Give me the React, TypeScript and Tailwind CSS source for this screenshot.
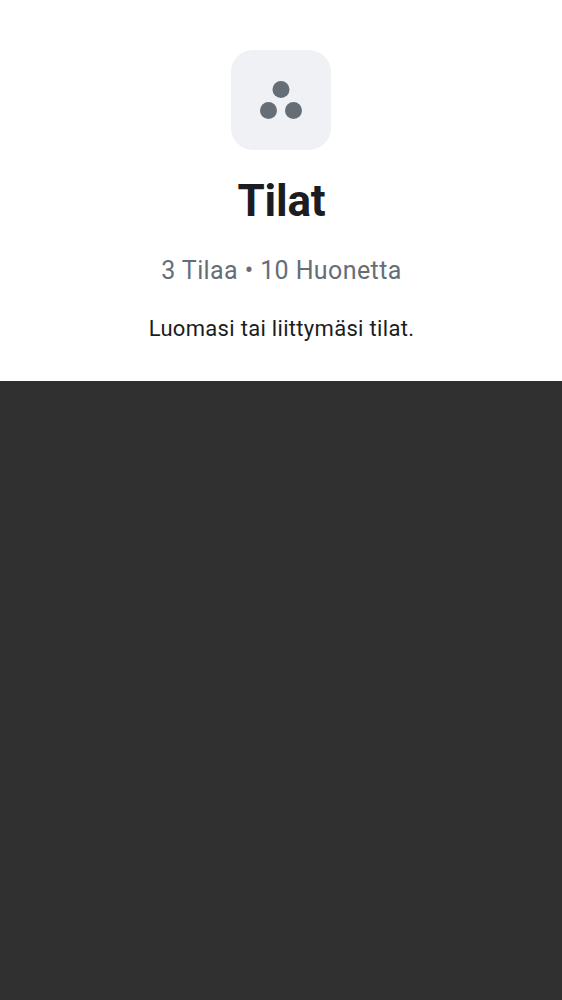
export default function App() {
  return (
    <main className="flex h-[1000px] w-full flex-col bg-[#303030] font-['Roboto',sans-serif]">
      <section className="flex h-[381px] flex-col items-center bg-white pt-[50px] text-center">
        <div className="flex size-[100px] items-center justify-center rounded-[22px] bg-[#f0f1f5]">
          <svg viewBox="0 0 50 50" className="size-[50px] fill-[#656e77]" aria-hidden="true">
            <circle cx="25" cy="14.5" r="8.5" />
            <circle cx="12.5" cy="35.5" r="8.5" />
            <circle cx="37.5" cy="35.5" r="8.5" />
          </svg>
        </div>
        <h1 className="mt-[25px] pl-px text-[44px] leading-[52px] font-bold tracking-[-0.2px] text-[#1b1d22]">Tilat</h1>
        <p className="mt-[28px] pl-px text-[25px] leading-[32px] tracking-[0.4px] whitespace-nowrap text-[#656e77]">3 Tilaa • 10 Huonetta</p>
        <p className="mt-[28px] pl-px text-[22px] leading-[28px] tracking-[0.31px] whitespace-nowrap text-[#1b1d22]">Luomasi tai liittymäsi tilat.</p>
      </section>
    </main>
  );
}
